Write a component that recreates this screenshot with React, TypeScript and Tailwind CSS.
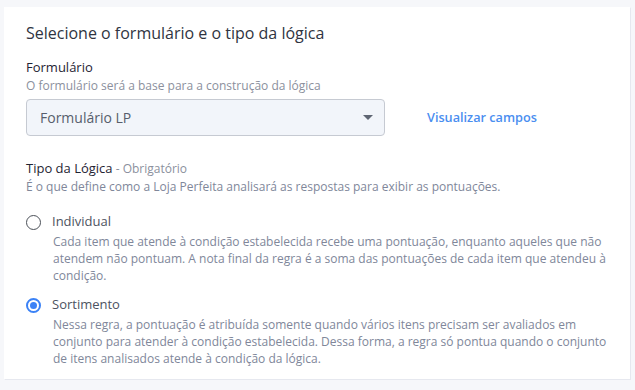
import { FC } from 'react';

interface IRadioOptionProps {
  label: string;
  description: string;
  checked?: boolean;
}

const RadioOption: FC<IRadioOptionProps> = ({ label, description, checked }) => {
  return (
    <div className="flex flex-col">
      <div className="flex h-[20px] items-center gap-[11px]">
        {checked ? (
          <div className="flex h-[15px] w-[15px] items-center justify-center rounded-full border-[2px] border-[#3b82f6]">
            <div className="h-[7px] w-[7px] rounded-full bg-[#3b82f6]" />
          </div>
        ) : (
          <div className="h-[15px] w-[15px] rounded-full border-[1.5px] border-[#4b5058]" />
        )}
        <span className="text-[13px] text-[#4d5361]">{label}</span>
      </div>
      <p className="mt-[1px] pl-[27px] pr-[20px] text-[12px] leading-[17px] text-[#80879a]">{description}</p>
    </div>
  );
};

const App: FC = () => {
  return (
    <div className="h-[390px] w-[635px] bg-[#f6f7fa] pl-[4px] pt-[7px] font-['Open_Sans',sans-serif]">
      <div className="flex h-[373px] w-[627px] flex-col border border-[#e6e8ef] border-l-white border-t-white bg-white pl-[21px] pt-[14px]">
        <h1 className="text-[16px] leading-[22px] text-[#2f3441]">Selecione o formulário e o tipo da lógica</h1>

        <div className="mt-[14px] flex flex-col">
          <span className="text-[13px] leading-[18px] text-[#1f2433]">Formulário</span>
          <span className="mt-[1px] text-[12px] leading-[17px] text-[#8b909d]">O formulário será a base para a construção da lógica</span>
          <div className="mt-[5px] flex items-center">
            <div className="flex h-[37px] w-[359px] items-center justify-between rounded-[4px] border border-[#c6cad2] bg-[#f2f5fa] pl-[13px] pr-[11px]">
              <span className="text-[14px] text-[#575e6c]">Formulário LP</span>
              <svg width="10" height="5" viewBox="0 0 10 5">
                <path d="M0 0 L10 0 L5 5 Z" fill="#5f6673" />
              </svg>
            </div>
            <a className="ml-[42px] text-[12.7px] font-semibold text-[#4a8ef0]">Visualizar campos</a>
          </div>
        </div>

        <div className="mt-[22px] flex flex-col">
          <div className="leading-[18px]">
            <span className="text-[13px] text-[#1f2433]">Tipo da Lógica</span>
            <span className="text-[12px] text-[#8b909d]"> - Obrigatório</span>
          </div>
          <span className="text-[12px] leading-[17px] text-[#80879a]">É o que define como a Loja Perfeita analisará as respostas para exibir as pontuações.</span>
        </div>

        <div className="mt-[17px] flex flex-col gap-[11px]">
          <RadioOption
            label="Individual"
            description="Cada item que atende à condição estabelecida recebe uma pontuação, enquanto aqueles que não atendem não pontuam. A nota final da regra é a soma das pontuações de cada item que atendeu à condição."
          />
          <RadioOption
            checked
            label="Sortimento"
            description="Nessa regra, a pontuação é atribuída somente quando vários itens precisam ser avaliados em conjunto para atender à condição estabelecida. Dessa forma, a regra só pontua quando o conjunto de itens analisados atende à condição da lógica."
          />
        </div>
      </div>
    </div>
  );
};

export default App;
